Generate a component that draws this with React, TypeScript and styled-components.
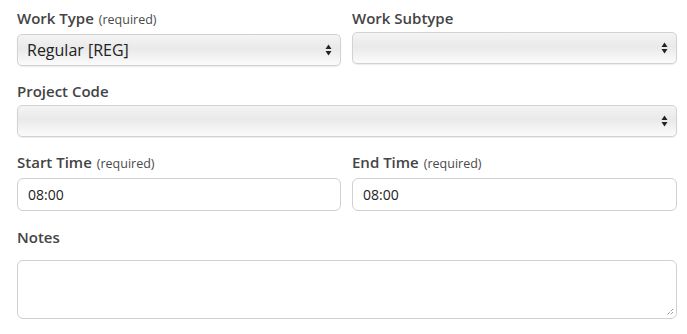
import React from 'react';
import styled, { createGlobalStyle } from 'styled-components';

const GlobalStyle = createGlobalStyle`
  body {
    margin: 0;
    background: #fff;
    font-family: 'Open Sans', 'Liberation Sans', sans-serif;
    color: #333;
  }
`;

const Form = styled.form`
  width: 660px;
  padding: 8px 10px 0 17px;
  display: grid;
  grid-template-columns: 324px 325px;
  column-gap: 11px;
`;

const Field = styled.div<{ $wide?: boolean; $gap?: number }>`
  grid-column: ${(p) => (p.$wide ? '1 / span 2' : 'auto')};
  display: flex;
  flex-direction: column;
  margin-bottom: ${(p) => p.$gap ?? 15}px;
`;

const Label = styled.label<{ $space?: number }>`
  font-size: 15px;
  font-weight: 600;
  line-height: 20px;
  color: #444;
  margin-bottom: ${(p) => p.$space ?? 4}px;
  small {
    font-size: 12.5px;
    font-weight: 400;
    margin-left: 5px;
    color: #4a4a4a;
  }
`;

const SelectBox = styled.div`
  position: relative;
  height: 32px;
  box-sizing: border-box;
  border: 1px solid #d2d2d2;
  border-radius: 5px;
  background: linear-gradient(#f4f4f4, #e9e9e9 45%, #fbfbfb);
  box-shadow: 0 1px 1px rgba(0, 0, 0, 0.08);
  display: flex;
  align-items: center;
  padding: 0 9px;
  font-size: 16px;
  color: #222;
`;

const Arrows = styled.svg`
  position: absolute;
  right: 8px;
  top: 50%;
  margin-top: -6px;
`;

const TextInput = styled.div`
  height: 33px;
  box-sizing: border-box;
  border: 1px solid #d0d0d0;
  border-radius: 6px;
  display: flex;
  align-items: center;
  padding: 0 10px;
  font-size: 14px;
  color: #222;
`;

const NoteBox = styled.div`
  position: relative;
  height: 59px;
  box-sizing: border-box;
  border: 1px solid #d0d0d0;
  border-radius: 6px;
`;

const Grip = styled.svg`
  position: absolute;
  right: 2px;
  bottom: 2px;
`;

const Select = ({ value }: { value?: string }) => (
  <SelectBox>
    {value}
    <Arrows width="7" height="12" viewBox="0 0 7 12">
      <path d="M3.5 0.5 L6.5 5 H0.5 Z" fill="#222" />
      <path d="M3.5 11.5 L6.5 7 H0.5 Z" fill="#222" />
    </Arrows>
  </SelectBox>
);

export default function App() {
  return (
    <>
      <GlobalStyle />
      <Form>
        <Field>
          <Label>
            Work Type<small>(required)</small>
          </Label>
          <Select value="Regular [REG]" />
        </Field>
        <Field>
          <Label>Work Subtype</Label>
          <Select />
        </Field>
        <Field $wide>
          <Label>Project Code</Label>
          <Select />
        </Field>
        <Field $gap={16}>
          <Label>
            Start Time<small>(required)</small>
          </Label>
          <TextInput>08:00</TextInput>
        </Field>
        <Field $gap={16}>
          <Label>
            End Time<small>(required)</small>
          </Label>
          <TextInput>08:00</TextInput>
        </Field>
        <Field $wide>
          <Label $space={13}>Notes</Label>
          <NoteBox>
            <Grip width="8" height="8" viewBox="0 0 8 8">
              <path d="M7 1 L1 7 M7 4 L4 7" stroke="#666" strokeWidth="1" strokeDasharray="1 1" />
            </Grip>
          </NoteBox>
        </Field>
      </Form>
    </>
  );
}
